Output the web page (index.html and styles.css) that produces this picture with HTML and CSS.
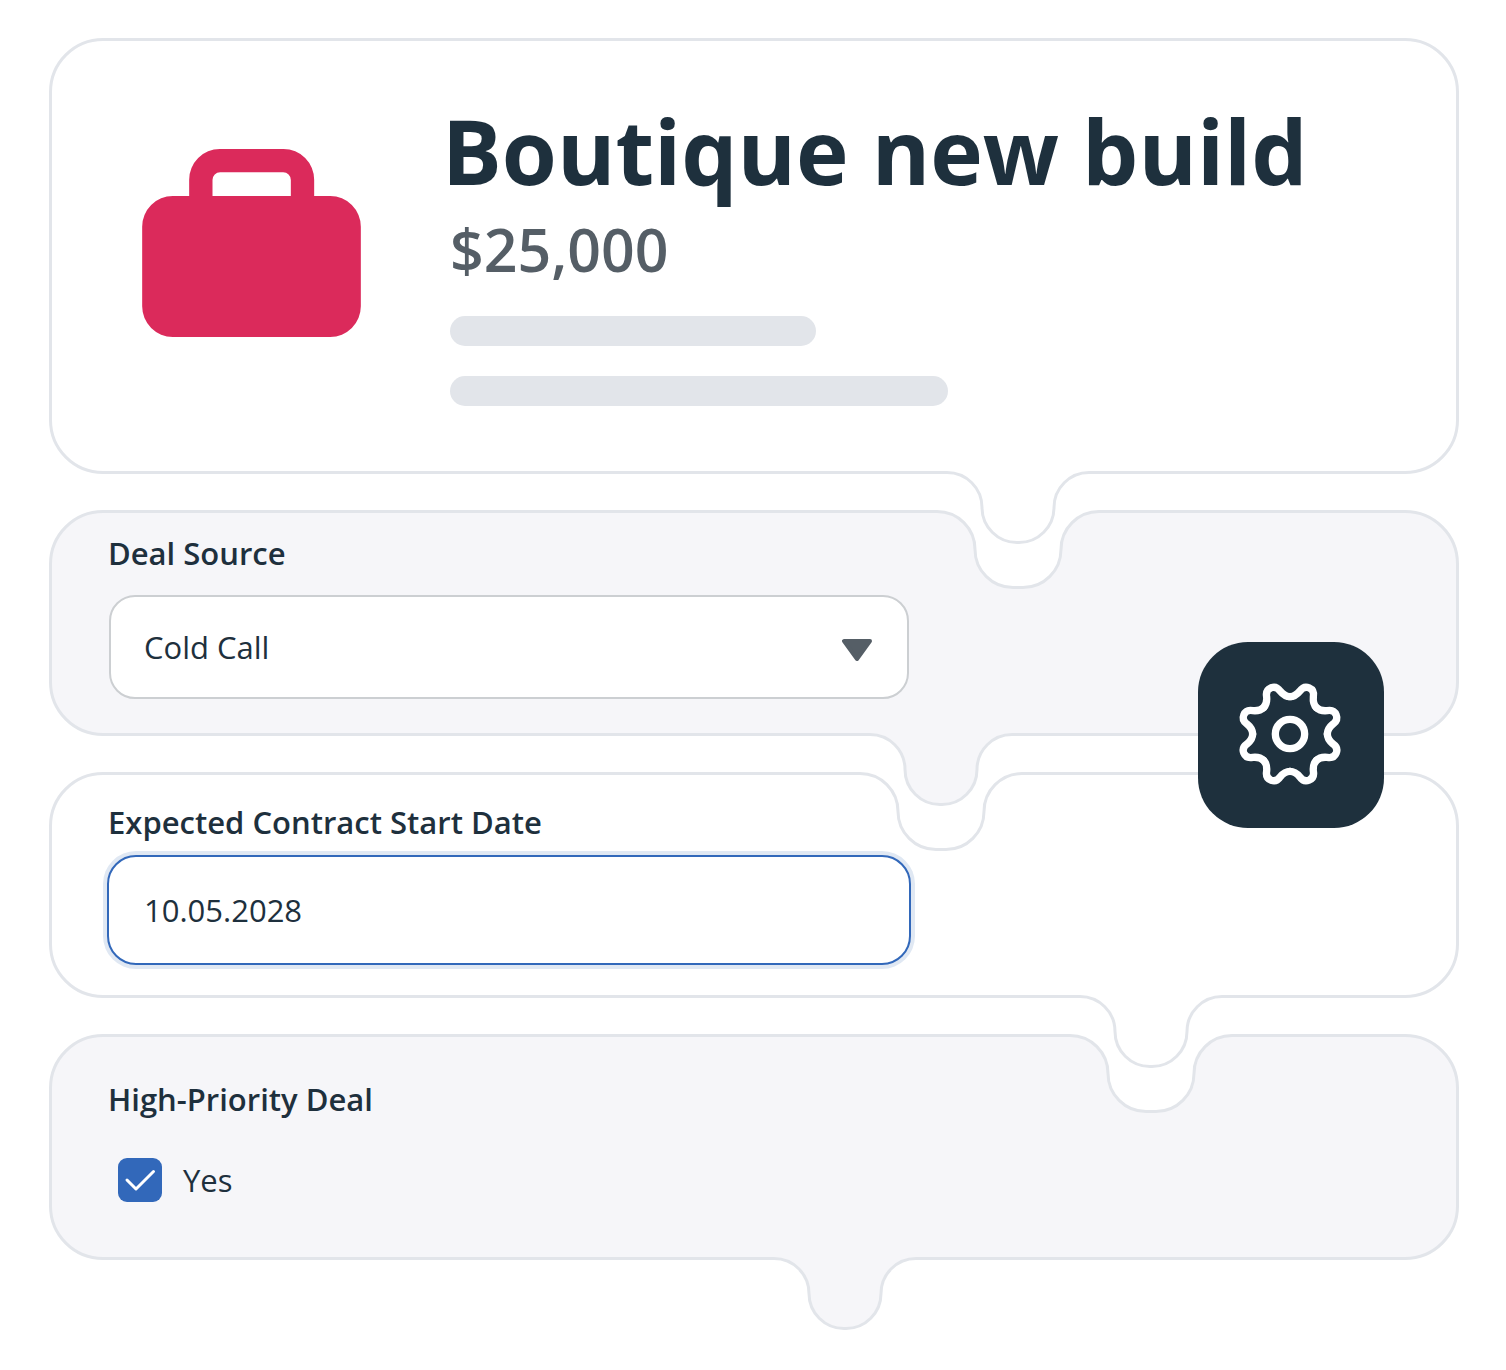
FILE: index.html
```html
<!DOCTYPE html>
<html lang="en">
<head>
<meta charset="utf-8">
<meta name="viewport" content="width=device-width, initial-scale=1">
<title>Boutique new build</title>
<link rel="stylesheet" href="styles.css">
</head>
<body>
<svg class="defs" aria-hidden="true">
  <defs>
    <g id="tab">
      <rect class="joint-page" x="-71" y="0" width="142" height="3"/>
      <path class="joint-card" d="M-71 0V1.5A35 35 0 0 1 -36 36.500A35 35 0 0 0 -1 71.500H1A35 35 0 0 0 36 36.500A35 35 0 0 1 71 1.500V0Z"/>
      <path class="joint-line" d="M-71 1.500A35 35 0 0 1 -36 36.500A35 35 0 0 0 -1 71.500H1A35 35 0 0 0 36 36.500A35 35 0 0 1 71 1.500"/>
    </g>
    <g id="notch">
      <rect class="joint-card" x="-81" y="0" width="162" height="3"/>
      <path class="joint-page" d="M-81 0V1.500A38 38 0 0 1 -43 39.500A38 38 0 0 0 -5 77.500H5A38 38 0 0 0 43 39.500A38 38 0 0 1 81 1.500V0Z"/>
      <path class="joint-line" d="M-81 1.500A38 38 0 0 1 -43 39.500A38 38 0 0 0 -5 77.500H5A38 38 0 0 0 43 39.500A38 38 0 0 1 81 1.500"/>
    </g>
    <path id="tooth" d="M-42.900 -103.500C-32 -108 -26 -117 -22 -130C-19 -144 -11 -150 0 -150S19 -144 22 -130C26 -117 32 -108 42.900 -103.500"/>
  </defs>
</svg>
<main class="stack">
  <section class="card summary">
    <svg class="briefcase" viewBox="35 57 656 564" aria-hidden="true">
      <path fill-rule="evenodd" d="M176 198V149A92 92 0 0 1 268 57H459A92 92 0 0 1 551 149V198H599A92 92 0 0 1 691 290V529A92 92 0 0 1 599 621H127A92 92 0 0 1 35 529V290A92 92 0 0 1 127 198ZM246 198H481V150A23 23 0 0 0 458 127H269A23 23 0 0 0 246 150Z"/>
    </svg>
    <div class="details">
      <h1 class="title">Boutique new build</h1>
      <p class="amount">$25,000</p>
      <div class="bars">
        <span class="bar bar-short"></span>
        <span class="bar bar-long"></span>
      </div>
    </div>
    <svg class="joint tab at-source" viewBox="-82 0 164 80" aria-hidden="true"><use href="#tab"/></svg>
  </section>

  <section class="card source shaded">
    <svg class="joint notch at-source" viewBox="-82 0 164 80" aria-hidden="true"><use href="#notch"/></svg>
    <label class="label" for="source">Deal Source</label>
    <div class="select-wrap">
      <select class="control select" id="source">
        <option>Cold Call</option>
      </select>
      <svg class="arrow" viewBox="0 0 30 22" aria-hidden="true"><path d="M2 2H28L15 20Z"/></svg>
    </div>
    <svg class="joint tab at-date" viewBox="-82 0 164 80" aria-hidden="true"><use href="#tab"/></svg>
    <button class="settings" type="button" aria-label="Settings">
      <svg class="gear" viewBox="-276 -276 558 558" aria-hidden="true">
        <circle r="44"/>
        <use href="#tooth" transform="rotate(22.500)"/>
        <use href="#tooth" transform="rotate(67.500)"/>
        <use href="#tooth" transform="rotate(112.500)"/>
        <use href="#tooth" transform="rotate(157.500)"/>
        <use href="#tooth" transform="rotate(202.500)"/>
        <use href="#tooth" transform="rotate(247.500)"/>
        <use href="#tooth" transform="rotate(292.500)"/>
        <use href="#tooth" transform="rotate(337.500)"/>
      </svg>
    </button>
  </section>

  <section class="card date">
    <svg class="joint notch at-date" viewBox="-82 0 164 80" aria-hidden="true"><use href="#notch"/></svg>
    <label class="label" for="start">Expected Contract Start Date</label>
    <input class="control date-input" id="start" type="text" value="10.05.2028">
    <svg class="joint tab at-priority" viewBox="-82 0 164 80" aria-hidden="true"><use href="#tab"/></svg>
  </section>

  <section class="card priority shaded" role="group" aria-labelledby="priority-label">
    <svg class="joint notch at-priority" viewBox="-82 0 164 80" aria-hidden="true"><use href="#notch"/></svg>
    <span class="label" id="priority-label">High-Priority Deal</span>
    <div class="option">
      <span class="check">
        <input class="checkbox" id="priority" type="checkbox" checked>
        <svg class="tick" viewBox="0 0 44 44" aria-hidden="true"><path d="M9 22L18 31L35.500 13.500"/></svg>
      </span>
      <label for="priority">Yes</label>
    </div>
    <svg class="joint tab at-end" viewBox="-82 0 164 80" aria-hidden="true"><use href="#tab"/></svg>
  </section>
</main>
</body>
</html>
```
FILE: styles.css
```css
:root {
  --page: #ffffff;
  --line: #e2e5ea;
  --shade: #f6f6f9;
  --ink: #1e303d;
  --muted: #555e66;
  --blue: #3268ba;
  --pink: #db2a5b;
}

* {
  box-sizing: border-box;
}

body {
  margin: 0;
  background: var(--page);
  color: var(--ink);
  font-family: "Open Sans", "Noto Sans", sans-serif;
  font-size: 31px;
  line-height: 42px;
}

.defs {
  position: absolute;
  width: 0;
  height: 0;
}

.stack {
  display: flex;
  flex-direction: column;
  gap: 36px;
  padding: 38px 47px 110px 49px;
}

.card {
  --fill: var(--page);
  position: relative;
  display: flex;
  flex-direction: column;
  border: 3px solid var(--line);
  border-radius: 54px;
  background: var(--fill);
  padding-left: 55px;
  padding-right: 55px;
}

.shaded {
  --fill: var(--shade);
}

/* Puzzle joints that sit over the card borders */
.joint {
  position: absolute;
  width: 164px;
  height: 80px;
  margin-left: -82px;
  pointer-events: none;
}

.tab {
  top: 100%;
  z-index: 2;
}

.notch {
  top: -3px;
}

.at-source { left: 68.8%; }
.at-date { left: 63.3%; }
.at-priority { left: 78.3%; }
.at-end { left: 56.5%; }

.joint-page { fill: var(--page); }
.joint-card { fill: var(--fill); }

.joint-line {
  fill: none;
  stroke: var(--line);
  stroke-width: 3px;
}

.summary {
  flex-direction: row;
  align-items: flex-start;
  gap: 81px;
  padding: 58px 90px 65px;
}

.briefcase {
  flex: none;
  width: 219px;
  height: 188px;
  margin-top: 50px;
  fill: var(--pink);
}

.details {
  flex: 1;
  min-width: 0;
}

.title {
  margin: 0;
  font-size: 89px;
  font-weight: 700;
  line-height: 104px;
}

.amount {
  margin: 10px 0 31px 8px;
  color: var(--muted);
  font-size: 59px;
  font-weight: 600;
  line-height: 72px;
}

.bars {
  display: flex;
  flex-direction: column;
  gap: 30px;
  margin-left: 8px;
}

.bar {
  height: 30px;
  border-radius: 15px;
  background: var(--line);
}

.bar-short { width: 366px; }
.bar-long { width: 498px; }

.source { padding-top: 19px; padding-bottom: 34px; gap: 21px; }
.date { padding-top: 26px; padding-bottom: 30px; gap: 12px; }
.priority { padding-top: 41px; padding-bottom: 55px; gap: 38px; }

.label {
  padding-left: 1px;
  font-weight: 600;
}

.control {
  width: 100%;
  margin: 0;
  border: 2px solid;
  background: var(--page);
  color: inherit;
  font: inherit;
  outline: none;
}

.select-wrap {
  position: relative;
  max-width: 800px;
  margin-left: 2px;
}

.select {
  display: block;
  height: 104px;
  padding: 0 80px 0 33px;
  border-color: #cccfd2;
  border-radius: 26px;
  appearance: none;
}

.arrow {
  position: absolute;
  top: 44px;
  right: 37px;
  width: 30px;
  height: 22px;
  fill: var(--muted);
  stroke: var(--muted);
  stroke-width: 4px;
  stroke-linejoin: round;
  pointer-events: none;
}

.date-input {
  max-width: 804px;
  height: 110px;
  padding: 0 35px;
  border-color: var(--blue);
  border-radius: 29px;
  box-shadow: 0 0 0 4px #e0e8f3;
}

.settings {
  position: absolute;
  right: 72px;
  bottom: -95px;
  z-index: 3;
  width: 186px;
  height: 186px;
  padding: 0;
  border: 0;
  border-radius: 50px;
  background: var(--ink);
}

.gear {
  display: block;
  width: 100%;
  height: 100%;
  fill: none;
  stroke: #ffffff;
  stroke-width: 22px;
  stroke-linecap: round;
}

.option {
  display: flex;
  align-items: center;
  gap: 21px;
  margin-left: 11px;
}

.check {
  position: relative;
  width: 44px;
  height: 44px;
}

.checkbox {
  display: block;
  width: 44px;
  height: 44px;
  margin: 0;
  border-radius: 9px;
  background: var(--page);
  appearance: none;
}

.checkbox:checked {
  background: var(--blue);
}

.tick {
  position: absolute;
  inset: 0;
  fill: none;
  stroke: #ffffff;
  stroke-width: 3px;
  stroke-linecap: round;
  stroke-linejoin: round;
  pointer-events: none;
}
```
